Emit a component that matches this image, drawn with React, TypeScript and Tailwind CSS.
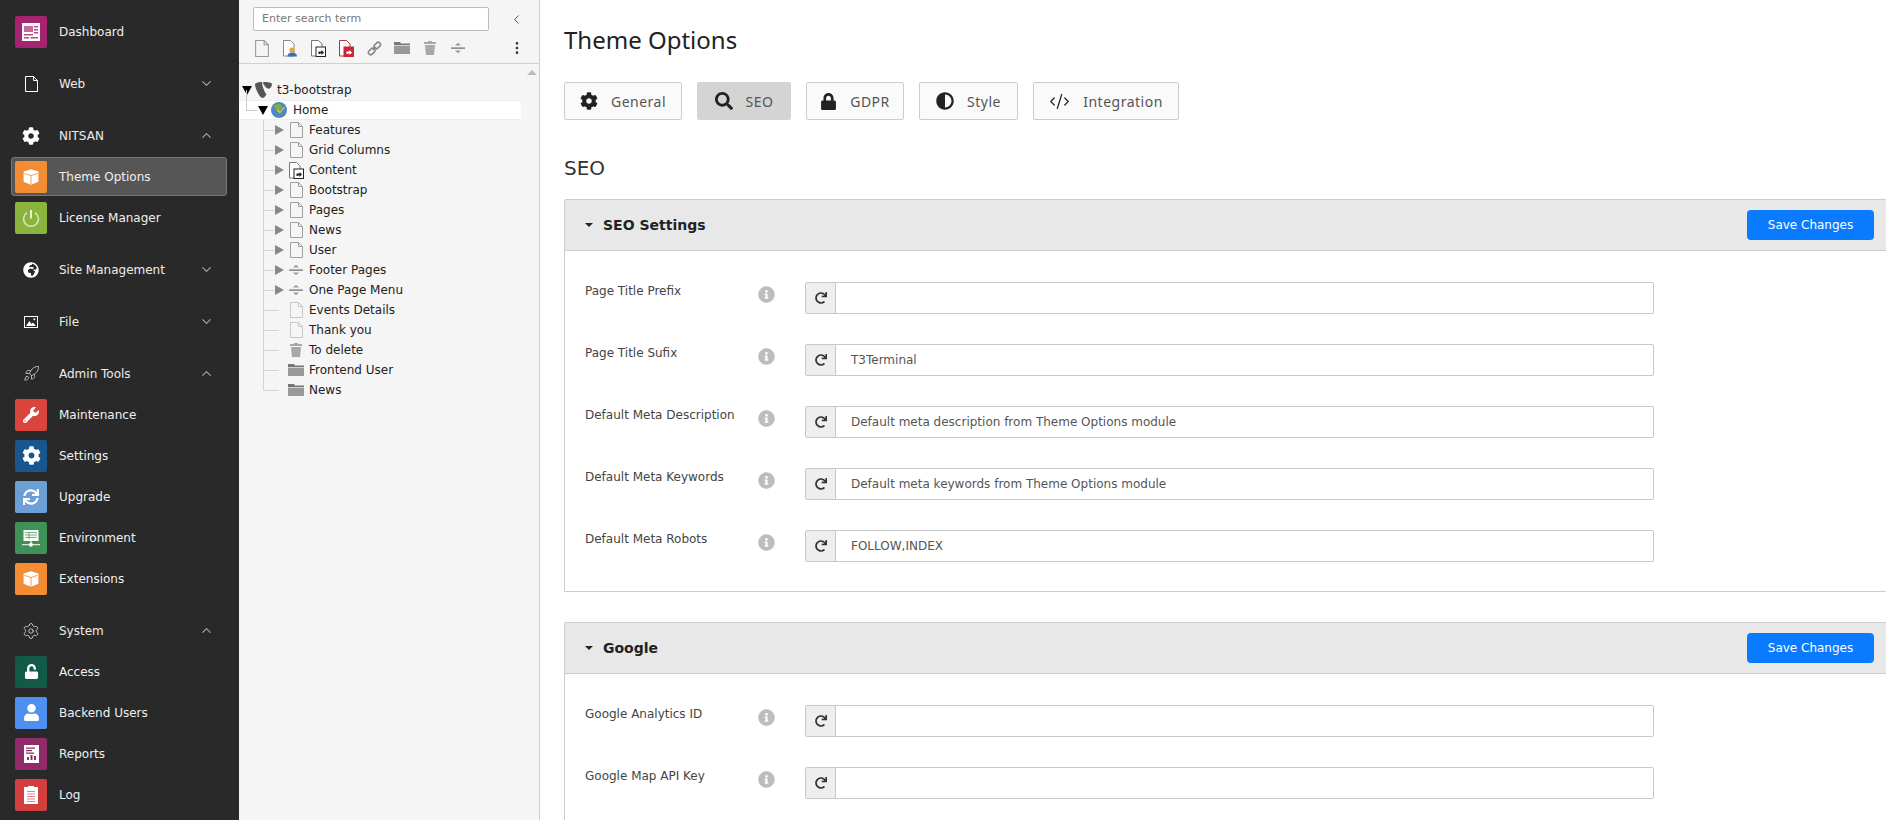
import React from 'react';
import { ChevronDown, ChevronLeft, ChevronUp, CodeXml, EllipsisVertical, Rocket, Settings } from 'lucide-react';
import { FaAdjust, FaCog, FaGlobeAfrica, FaInfoCircle, FaLock, FaRedo, FaSearch, FaSync, FaUnlock, FaUser, FaWrench } from 'react-icons/fa';

const PageGlyph = ({ color = '#a0a0a0', fill = 'none', size = 16 }: { color?: string; fill?: string; size?: number }) => (
  <svg width={size - 3} height={size} viewBox="0 0 13 16" fill={fill}>
    <path d="M.5.5h8l4 4v11H.5z" stroke={color} />
    <path d="M8.5.5v4h4" stroke={color} fill="none" />
  </svg>
);

const ShortcutGlyph = ({ color = '#777', badge = '#222' }: { color?: string; badge?: string }) => (
  <svg width="15" height="17" viewBox="0 0 15 17" fill="none">
    <path d="M.5.5h7l3.5 3.5v12H.5z" stroke={color} fill="#fff" />
    <rect x="5" y="7" width="9.5" height="9.5" fill={badge === '#222' ? '#fff' : badge} stroke={badge} />
    <path d="M7.5 14v-2.5h3V10l2.5 2.5-2.5 2.5v-1.6H9V14z" fill={badge === '#222' ? '#222' : '#fff'} />
  </svg>
);

const FolderGlyph = () => (
  <svg width="16" height="12" viewBox="0 0 16 12">
    <path d="M0 0h6l1 1.5h9V3H0z" fill="#777" />
    <rect y="3.6" width="16" height="8.4" fill="#999" />
  </svg>
);

const TrashGlyph = () => (
  <svg width="12" height="14" viewBox="0 0 12 14">
    <path d="M4 0h4v1h4v2H0V1h4z" fill="#a8a8a8" />
    <path d="M1 4h10l-1 10H2z" fill="#a8a8a8" />
  </svg>
);

const DividerGlyph = () => (
  <svg width="14" height="12" viewBox="0 0 14 12">
    <path d="M0 5.5h14v1.2H0z" fill="#666" />
    <path d="M4 3.5L7 .8l3 2.7zM4 8.5l3 2.7 3-2.7z" fill="#999" />
  </svg>
);

const LinkGlyph = () => (
  <svg width="15" height="15" viewBox="0 0 15 15" fill="none" stroke="#888" strokeWidth="1.6">
    <path d="M6 9l3-3" />
    <rect x="8" y="1" width="4.5" height="7" rx="2" transform="rotate(45 10.2 4.5)" />
    <rect x="2.4" y="7" width="4.5" height="7" rx="2" transform="rotate(45 4.6 10.5)" />
  </svg>
);

const BackendUserPage = () => (
  <svg width="15" height="17" viewBox="0 0 15 17" fill="none">
    <path d="M.5.5h7l3.5 3.5v12H.5z" stroke="#888" fill="#fff" />
    <circle cx="9" cy="10" r="2.6" fill="#e8a33d" />
    <path d="M4.5 16.5c0-3 2-4 4.5-4s5 1 5 4z" fill="#3d6fb4" />
  </svg>
);

const Typo3Logo = () => (
  <svg width="17" height="16" viewBox="0 0 17 16">
    <path d="M0 2.5C0 1.2 3 0 6 0c.6 0 1 .1 1.2.5C6.6 3 10 11 11.4 12.4 10 14.6 8.6 16 7.6 16 4.6 16 0 6 0 2.5z" fill="#555" />
    <path d="M9.2 0C12 0 17 .6 17 1.8c0 2-1.4 5-3.4 5-2.2 0-5.6-4.4-5.6-6 0-.5.6-.8 1.2-.8z" fill="#555" />
  </svg>
);

const HomeGlobe = () => (
  <svg width="16" height="16" viewBox="0 0 16 16">
    <circle cx="8" cy="8" r="8" fill="#4f86c6" />
    <path d="M3 3.5l4-2 3 1 1.5 3-2.5 2-1 3-2-1-1-3-2.5-1z" fill="#7fae3f" />
    <path d="M6.5 7.5l2.5 2L13 4.5l1 1-5 6-3.5-3z" fill="#d9c63a" />
  </svg>
);

const CubeGlyph = () => (
  <svg width="18" height="18" viewBox="0 0 18 18">
    <path d="M9 1.2l7.4 2.4v10.2L9 16.8 1.6 13.8V3.6z" fill="#fff" />
    <path d="M2.4 5.3L9 7.6l6.6-2.3M9 7.6v8.6" fill="none" stroke="#f0a05c" strokeWidth="1" />
  </svg>
);

const DashGlyph = () => (
  <svg width="18" height="18" viewBox="0 0 18 18">
    <rect width="18" height="18" fill="#fff" />
    <rect x="2" y="3" width="9" height="6" fill="#c66a9c" />
    <path d="M12 3h4v1.4h-4zM12 6h4v1.4h-4zM12 9h4v1.4h-4zM2 11h9v1.4H2zM2 14h5v1.4H2zM8.5 14H16v1.4H8.5z" fill="#b64c88" />
  </svg>
);

const PowerGlyph = () => (
  <svg width="18" height="18" viewBox="0 0 18 18" fill="none" stroke="#d7e6b4" strokeWidth="1.6">
    <path d="M5 3.6a7.4 7.4 0 1 0 8 0" />
    <path d="M9 1v8.5" stroke="#fff" />
  </svg>
);

const EnvGlyph = () => (
  <svg width="18" height="18" viewBox="0 0 18 18">
    <rect x="1.5" y="1" width="15" height="11" fill="#fff" />
    <path d="M3 3.6h12M3 6h12M3 8.4h12M7 3v7" stroke="#4a9a60" strokeWidth=".8" />
    <path d="M0 15.2h18v1H0z" fill="#fff" />
    <circle cx="9" cy="15.7" r="2" fill="#fff" />
    <path d="M8.4 12h1.2v3h-1.2z" fill="#fff" />
  </svg>
);

const ReportGlyph = () => (
  <svg width="15" height="18" viewBox="0 0 15 18">
    <path d="M0 0h15v18H0z" fill="#fff" />
    <path d="M2 2.5h9v1.2H2zM2 5h6v1.2H2zM2 7.5h8v1.2H2zM3 15v-3h2v3zM6.5 15v-5h2v5zM10 15v-4h2v4z" fill="#8c2f66" />
  </svg>
);

const LogGlyph = () => (
  <svg width="14" height="18" viewBox="0 0 14 18">
    <path d="M0 1h4V0h6v1h4v17H0z" fill="#fff" />
    <path d="M3 5h8v1H3zM3 7.5h8v1H3zM3 10h8v1H3zM3 12.5h8v1H3zM3 15h8v1H3z" fill="#d88" />
  </svg>
);

const ImageGlyph = () => (
  <svg width="14" height="12" viewBox="0 0 14 12">
    <rect x=".5" y=".5" width="13" height="11" fill="none" stroke="#fff" />
    <path d="M2 10l3.4-5 2.2 3 1.4-1.4L12 10z" fill="#fff" />
    <circle cx="10.4" cy="3.2" r="1" fill="#fff" />
  </svg>
);

const ModuleRow = ({ bg, icon, label, active }: { bg: string; icon: React.ReactNode; label: string; active?: boolean }) => (
  <div className="h-[41px] flex items-center relative">
    {active && <div className="absolute left-[11px] w-[216px] top-[1px] h-[39px] rounded-[3px] bg-[#565656] border border-[#777]" />}
    <div className={`relative ml-[15px] w-8 h-8 rounded-[2px] flex items-center justify-center text-white ${bg}`}>{icon}</div>
    <span className="relative ml-[12px] text-[#f0f0f0]">{label}</span>
  </div>
);

const GroupRow = ({ icon, label, open }: { icon: React.ReactNode; label: string; open?: boolean }) => (
  <div className="h-[41px] flex items-center text-white">
    <div className="ml-[15px] w-8 h-8 flex items-center justify-center">{icon}</div>
    <span className="ml-[12px] flex-1 text-[#ececec]">{label}</span>
    {open
      ? <ChevronUp size={15} strokeWidth={1.7} className="mr-[25px] text-[#aaa]" />
      : <ChevronDown size={15} strokeWidth={1.7} className="mr-[25px] text-[#aaa]" />}
  </div>
);

const Sidebar = () => (
  <aside className="w-[239px] shrink-0 h-full bg-[#292929] overflow-hidden pt-[11px] text-[12px]">
    <ModuleRow bg="bg-[#a6246f]" icon={<DashGlyph />} label="Dashboard" />
    <div className="mt-[11px]">
      <GroupRow icon={<PageGlyph color="#fff" size={16} />} label="Web" />
    </div>
    <div className="mt-[11px]">
      <GroupRow icon={<FaCog size={18} />} label="NITSAN" open />
      <ModuleRow bg="bg-[#f28d34]" icon={<CubeGlyph />} label="Theme Options" active />
      <ModuleRow bg="bg-[#8bb43f]" icon={<PowerGlyph />} label="License Manager" />
    </div>
    <div className="mt-[11px]">
      <GroupRow icon={<FaGlobeAfrica size={16} />} label="Site Management" />
    </div>
    <div className="mt-[11px]">
      <GroupRow icon={<ImageGlyph />} label="File" />
    </div>
    <div className="mt-[11px]">
      <GroupRow icon={<Rocket size={17} strokeWidth={1.2} className="text-[#ccc]" />} label="Admin Tools" open />
      <ModuleRow bg="bg-[#d9443c]" icon={<FaWrench size={16} />} label="Maintenance" />
      <ModuleRow bg="bg-[#19568f]" icon={<FaCog size={19} />} label="Settings" />
      <ModuleRow bg="bg-[#6b9fd6]" icon={<FaSync size={16} />} label="Upgrade" />
      <ModuleRow bg="bg-[#3f9157]" icon={<EnvGlyph />} label="Environment" />
      <ModuleRow bg="bg-[#f28d34]" icon={<CubeGlyph />} label="Extensions" />
    </div>
    <div className="mt-[11px]">
      <GroupRow icon={<Settings size={18} strokeWidth={1.1} className="text-[#ddd]" />} label="System" open />
      <ModuleRow bg="bg-[#125a48]" icon={<FaUnlock size={15} />} label="Access" />
      <ModuleRow bg="bg-[#4d90f0]" icon={<FaUser size={17} />} label="Backend Users" />
      <ModuleRow bg="bg-[#912a68]" icon={<ReportGlyph />} label="Reports" />
      <ModuleRow bg="bg-[#d23f3f]" icon={<LogGlyph />} label="Log" />
    </div>
  </aside>
);

const treeItems: { label: string; icon: React.ReactNode; caret: boolean }[] = [
  { label: 'Features', icon: <PageGlyph />, caret: true },
  { label: 'Grid Columns', icon: <PageGlyph />, caret: true },
  { label: 'Content', icon: <ShortcutGlyph />, caret: true },
  { label: 'Bootstrap', icon: <PageGlyph />, caret: true },
  { label: 'Pages', icon: <PageGlyph />, caret: true },
  { label: 'News', icon: <PageGlyph />, caret: true },
  { label: 'User', icon: <PageGlyph />, caret: true },
  { label: 'Footer Pages', icon: <DividerGlyph />, caret: true },
  { label: 'One Page Menu', icon: <DividerGlyph />, caret: true },
  { label: 'Events Details', icon: <PageGlyph color="#c8c8c8" />, caret: false },
  { label: 'Thank you', icon: <PageGlyph color="#c8c8c8" />, caret: false },
  { label: 'To delete', icon: <TrashGlyph />, caret: false },
  { label: 'Frontend User', icon: <FolderGlyph />, caret: false },
  { label: 'News', icon: <FolderGlyph />, caret: false },
];

const TreePanel = () => (
  <section className="w-[301px] shrink-0 h-full bg-[#f5f5f5] border-r border-[#cfcfcf] text-[12px] text-[#222]">
    <div className="h-[64px] border-b border-[#d0d0d0] pl-[13px]">
      <div className="flex items-center h-[37px] pt-[1px]">
        <div className="w-[236px] ml-px h-[24px] bg-white border border-[#bdbdbd] rounded-[2px] flex items-center pl-[8px] text-[11px] text-[#777]">Enter search term</div>
        <ChevronLeft size={15} strokeWidth={1.5} className="ml-[20px] text-[#444]" />
      </div>
      <div className="flex items-center h-[22px]">
        <div className="w-[28px] flex justify-center -ml-[4px]"><PageGlyph color="#999" size={17} /></div>
        <div className="w-[28px] flex justify-center"><BackendUserPage /></div>
        <div className="w-[28px] flex justify-center"><ShortcutGlyph /></div>
        <div className="w-[28px] flex justify-center"><ShortcutGlyph badge="#c8283c" color="#a33" /></div>
        <div className="w-[28px] flex justify-center"><LinkGlyph /></div>
        <div className="w-[28px] flex justify-center"><FolderGlyph /></div>
        <div className="w-[28px] flex justify-center"><TrashGlyph /></div>
        <div className="w-[28px] flex justify-center"><DividerGlyph /></div>
        <EllipsisVertical size={16} className="ml-[37px] text-[#333]" />
      </div>
    </div>
    <div className="relative pt-[16px]">
      <div className="absolute right-[2px] top-[6px] w-0 h-0 border-x-[5px] border-x-transparent border-b-[5px] border-b-[#bbb]" />
      <div className="h-5 flex items-center pl-[3px]">
        <span className="w-0 h-0 border-x-[5px] border-x-transparent border-t-[9px] border-t-black" />
        <span className="ml-[3px]"><Typo3Logo /></span>
        <span className="ml-[5px]">t3-bootstrap</span>
      </div>
      <div className="h-5 w-[282px] flex items-center pl-[19px] bg-white border-y border-[#eee] relative">
        <span className="absolute left-[7px] -top-[11px] h-[21px] w-[11px] border-l border-b border-[#ccc]" />
        <span className="w-0 h-0 border-x-[5px] border-x-transparent border-t-[9px] border-t-black" />
        <span className="ml-[3px]"><HomeGlobe /></span>
        <span className="ml-[6px]">Home</span>
      </div>
      {treeItems.map((item, i) => (
        <div key={i} className="h-5 flex items-center relative">
          <span className={`absolute left-[24px] top-0 w-px bg-[#d4d4d4] ${i === treeItems.length - 1 ? 'h-[10px]' : 'h-5'}`} />
          <span className={`absolute left-[24px] top-[10px] h-px bg-[#d4d4d4] ${item.caret ? 'w-[11px]' : 'w-4'}`} />
          <span className={`absolute left-[36px] w-0 h-0 border-y-[5px] border-y-transparent border-l-[9px] ${item.caret ? 'border-l-[#888]' : 'border-l-transparent'}`} />
          <span className="ml-[48px] w-[18px] flex justify-center">{item.icon}</span>
          <span className="ml-[4px]">{item.label}</span>
        </div>
      ))}
    </div>
  </section>
);

const tabs = [
  { label: 'General', icon: <FaCog size={18} />, w: 'w-[118px]' },
  { label: 'SEO', icon: <FaSearch size={18} />, w: 'w-[94px]', active: true },
  { label: 'GDPR', icon: <FaLock size={17} />, w: 'w-[98px]' },
  { label: 'Style', icon: <FaAdjust size={18} />, w: 'w-[99px]' },
  { label: 'Integration', icon: <CodeXml size={21} strokeWidth={1.4} />, w: 'w-[146px]' },
];

const Field = ({ label, value }: { label: string; value?: string }) => (
  <div className="flex h-[32px] items-start">
    <span className="w-[173px] text-[#444] leading-[18px]">{label}</span>
    <FaInfoCircle size={17} className="mt-[4px] text-[#bdbdbd] shrink-0" />
    <div className="ml-[30px] w-[849px] h-[32px] flex border border-[#c8c8c8] rounded-[2px] bg-white">
      <div className="w-[30px] shrink-0 bg-[#eee] border-r border-[#c8c8c8] flex items-center justify-center text-[#333]">
        <FaRedo size={12} />
      </div>
      <div className="pl-[15px] flex items-center text-[#555]">{value}</div>
    </div>
  </div>
);

const Panel = ({ title, children }: { title: string; children: React.ReactNode }) => (
  <div className="w-[1323px] border border-[#ccc] rounded-t-[2px] mb-[30px]">
    <div className="h-[51px] bg-[#e8e8e8] border-b border-[#ccc] flex items-center pl-[20px] pr-[12px]">
      <span className="w-0 h-0 border-x-[4px] border-x-transparent border-t-[4px] border-t-[#222]" />
      <span className="ml-[10px] flex-1 font-bold text-[14px] text-[#222]">{title}</span>
      <button className="w-[127px] h-[30px] rounded-[4px] bg-[#0a7bff] text-white text-[12px]">Save Changes</button>
    </div>
    <div className="pl-[20px] pt-[31px] pb-[29px] flex flex-col gap-[30px] text-[12px]">{children}</div>
  </div>
);

export default function App() {
  return (
    <div className="flex h-screen w-full overflow-hidden bg-white font-['DejaVu_Sans',sans-serif]">
      <Sidebar />
      <TreePanel />
      <main className="flex-1 min-w-0 overflow-hidden pl-[24px] pt-[24px]">
        <h1 className="font-['Noto_Sans',sans-serif] text-[24px] leading-8 text-[#222]">Theme Options</h1>
        <div className="flex gap-[15px] mt-[26px]">
          {tabs.map((t) => (
            <div key={t.label} className={`${t.w} h-[38px] flex items-center justify-center gap-[13px] border rounded-[2px] font-['Noto_Sans',sans-serif] text-[14px] tracking-[0.5px] text-[#555] ${t.active ? 'bg-[#d4d4d4] border-[#d4d4d4]' : 'bg-[#fafafa] border-[#ccc]'}`}>
              <span className="text-[#222]">{t.icon}</span>
              <span>{t.label}</span>
            </div>
          ))}
        </div>
        <h2 className="text-[20px] leading-7 mt-[34px] mb-[17px] text-[#333]">SEO</h2>
        <Panel title="SEO Settings">
          <Field label="Page Title Prefix" />
          <Field label="Page Title Sufix" value="T3Terminal" />
          <Field label="Default Meta Description" value="Default meta description from Theme Options module" />
          <Field label="Default Meta Keywords" value="Default meta keywords from Theme Options module" />
          <Field label="Default Meta Robots" value="FOLLOW,INDEX" />
        </Panel>
        <Panel title="Google">
          <Field label="Google Analytics ID" />
          <Field label="Google Map API Key" />
        </Panel>
      </main>
    </div>
  );
}
